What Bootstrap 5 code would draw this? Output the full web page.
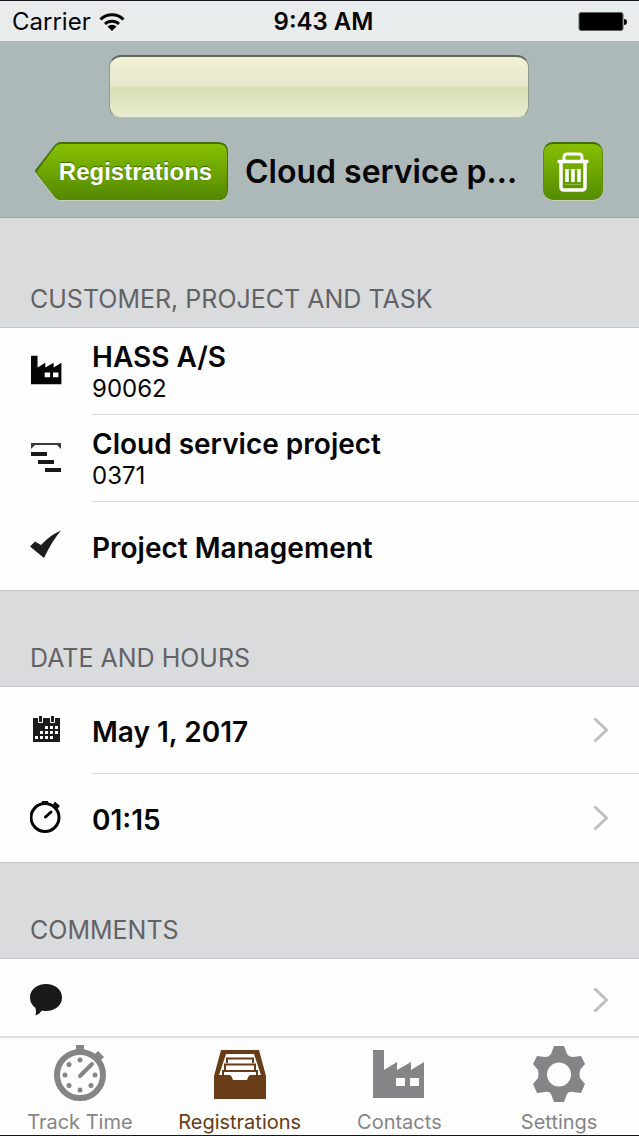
<!DOCTYPE html>
<html lang="en">
<head>
<meta charset="utf-8">
<meta name="viewport" content="width=device-width, initial-scale=1">
<title>Cloud service project</title>
<link href="https://cdn.jsdelivr.net/npm/bootstrap@5.3.0/dist/css/bootstrap.min.css" rel="stylesheet">
<style>
  body { font-family: Inter, "Liberation Sans", sans-serif; background: #dadbdd; color: #050505; }
  .shell { border-top: 1px solid #15161c; border-bottom: 1px solid #15161c; }
  .status-bar { height: 40px; background: #e9eced; font-size: 24px; line-height: 38px; padding: 2px 12px 0; }
  .status-side { flex: 1 1 0; }
  .status-time { padding-left: 8px; }
  .top-area { background: #adb8b8; border-bottom: 1px solid #9da6a6; padding: 14px 36px 15px 34px; }
  .search-field { width: 420px; max-width: 100%; height: 63px; border-radius: 12px; border: 1px solid #929b8b; border-top: 2px solid #62665a; border-bottom-color: #bcc4b4;
    background: linear-gradient(#f1f1d4, #e6e8cb 48%, #d8deb5 52%, #e8edd0); padding: 0 16px; font-size: 24px; }
  .title-row { margin-top: 24px; gap: 16px; }
  .page-title { font-size: 32px; line-height: 60px; font-weight: 600; margin: 0; min-width: 0; }
  .back-btn { position: relative; width: 195px; height: 60px; padding: 0 0 0 8px; border: 0; background: none; color: #fff; font: bold 24px/60px "Liberation Sans", Arial, sans-serif; text-shadow: 0 -1px 1px #3c6a00; }
  .back-btn svg { position: absolute; inset: 0; z-index: 0; }
  .back-btn span { position: relative; z-index: 1; }
  .trash-btn { width: 60px; height: 58px; margin-bottom: 2px; border: 1px solid #5c8f06; border-top: 2px solid #3e6d04; border-radius: 10px; padding: 0; background: linear-gradient(#86bf00, #558c00); box-shadow: 0 1px 0 #c3d1b5; }
  .section-title { font-size: 25px; line-height: 32px; font-weight: 400; color: #636366; margin: 0; padding: 51px 30px 12px; border-bottom: 1px solid #c6c7ca; }
  .section-first { padding-top: 65px; }
  .group-list { background: #fefefe; border-bottom: 1px solid #c6c7ca; }
  .entry { width: 100%; padding: 0 0 0 30px; border: 0; background: none; color: inherit; text-align: left; }
  .entry-icon { width: 32px; height: 36px; flex: none; margin-right: 30px; }
  .entry-body { min-height: 87px; padding-right: 30px; border-bottom: 1px solid #dcdce0; }
  .two-line { padding-top: 4px; }
  .last-entry .entry-body { border-bottom: 0; min-height: 88px; }
  .entry-name { font-size: 28px; line-height: 32px; font-weight: 600; }
  .one-line { padding-top: 3px; }
  .entry-sub { font-size: 24px; line-height: 32px; }
  .note-entry { padding-top: 4px; }
  .note-entry .entry-body { min-height: 73px; }
  .tab-bar { background: #fdfdfd; border-top: 2px solid #dedee1; padding-top: 7px; height: 99px; }
  .tab-link { flex: 1 1 0; color: #858587; text-decoration: none; font-size: 20px; line-height: 24px; }
  .tab-link.current { color: #673c16; }
  .tab-link svg { margin-bottom: 7px; }
</style>
</head>
<body>
<svg width="0" height="0" class="position-absolute" aria-hidden="true">
  <defs>
    <symbol id="factory" viewBox="0 0 52 50"><path fill-rule="evenodd" fill="currentColor" d="M0 1h11v20l13-8v8l14-8v8l13-8v36H0zM23 29v8h9v-8zM37 29v8h9v-8z"/></symbol>
    <symbol id="chevron" viewBox="0 0 16 26"><path d="M1.500 1.500 13.500 13 1.500 24.500" fill="none" stroke="#bfbfc4" stroke-width="3"/></symbol>
  </defs>
</svg>
<div class="shell d-flex flex-column min-vh-100">
  <header>
    <div class="status-bar d-flex align-items-center">
      <div class="status-side d-flex align-items-center gap-2">
        <span>Carrier</span>
        <svg width="26" height="20" viewBox="0 0 26 20" aria-hidden="true"><g fill="none" stroke="#050505" stroke-width="3"><path d="M1.500 7.500a16.500 16.500 0 0 1 23 0M6 12a10 10 0 0 1 14 0"/></g><path d="M8.500 14.500a6.500 6.500 0 0 1 9 0L13 19z"/></svg>
      </div>
      <span class="status-time fw-semibold">9:43 AM</span>
      <div class="status-side d-flex justify-content-end">
        <svg width="50" height="20" viewBox="0 0 50 20" aria-hidden="true"><rect x="2" y="0.500" width="44" height="18" rx="2" stroke="#606264" stroke-width="1"/><path d="M47 7q3 0 3 3t-3 3z"/></svg>
      </div>
    </div>
    <div class="top-area">
      <div class="d-flex justify-content-center">
        <input class="search-field" type="text" aria-label="Active registration">
      </div>
      <div class="title-row d-flex align-items-center">
        <button type="button" class="back-btn flex-shrink-0">
          <svg width="195" height="60" viewBox="0 0 195 60" aria-hidden="true">
            <defs><linearGradient id="leaf" x1="0" y1="0" x2="0" y2="1"><stop offset="0" stop-color="#87c100"/><stop offset="1" stop-color="#528800"/></linearGradient></defs>
            <path d="M27 3.500H184q10 0 10 10V50q0 9-10 9H27q-4 0-7-4L2 33q-2-2 0-4L20 7q3-3.500 7-3.500z" fill="#c3d1b5"/>
            <path d="M27 0H184q10 0 10 10V48q0 10-10 10H27q-4 0-7-4L2 31q-2-2 0-4L20 4q3-4 7-4z" fill="#426f08"/>
            <path d="M27 2H184q9 0 9 9V48q0 10-9 10H27q-4 0-6-3L3 31q-1-1 0-2L21 5q2-3 6-3z" fill="url(#leaf)"/>
          </svg>
          <span>Registrations</span>
        </button>
        <h1 class="page-title text-nowrap flex-grow-1">Cloud service p...</h1>
        <button type="button" class="trash-btn flex-shrink-0 d-flex align-items-center justify-content-center" aria-label="Delete">
          <svg width="32" height="40" viewBox="0 0 32 40" aria-hidden="true"><g fill="none" stroke="#fff" stroke-linecap="round" stroke-linejoin="round"><path stroke-width="3.500" d="M2 9.500H30M4 10V35q0 3 3 3H25q3 0 3-3V10"/><path stroke-width="3" d="M7 8V5q0-3 3-3H22q3 0 3 3V8"/></g><path fill="none" stroke="#fff" stroke-width="3.500" d="M10 17V30M16 17V30M22 17V30"/><path d="M8 17.500H24M8 32.500H24" stroke="#d9ecb8" stroke-opacity=".4" fill="none"/></svg>
        </button>
      </div>
    </div>
  </header>

  <main class="flex-grow-1 d-flex flex-column">
    <h2 class="section-title section-first">CUSTOMER, PROJECT AND TASK</h2>
    <div class="group-list">
      <div class="entry d-flex align-items-center">
        <svg class="entry-icon" viewBox="0 0 32 36" aria-hidden="true"><use href="#factory" x="1" y="1" width="31" height="30"/></svg>
        <div class="entry-body two-line flex-grow-1 d-flex flex-column justify-content-center">
          <div class="entry-name">HASS A/S</div><div class="entry-sub">90062</div>
        </div>
      </div>
      <div class="entry d-flex align-items-center">
        <svg class="entry-icon" viewBox="0 0 32 36" aria-hidden="true"><path fill="#3a3a3c" d="M1 2H31V8L27 4H5L1 8z"/><path fill="#19191b" d="M1 11H17v4H1zM8 19H24v4H8zM15 27H31v4H15z"/></svg>
        <div class="entry-body two-line flex-grow-1 d-flex flex-column justify-content-center">
          <div class="entry-name">Cloud service project</div><div class="entry-sub">0371</div>
        </div>
      </div>
      <div class="entry last-entry d-flex align-items-center">
        <svg class="entry-icon" viewBox="0 0 32 36" aria-hidden="true"><path fill="#1c1c1e" d="M0 18.500 5 13.500 11 17Q20 7 31 2.500 22 13 14 30z"/></svg>
        <div class="entry-body flex-grow-1 d-flex align-items-center"><div class="entry-name one-line">Project Management</div></div>
      </div>
    </div>

    <h2 class="section-title">DATE AND HOURS</h2>
    <div class="group-list">
      <button type="button" class="entry d-flex align-items-center">
        <svg class="entry-icon" viewBox="0 0 32 36" aria-hidden="true"><path fill="#1c1c1e" d="M3 5H30V29H3z"/><path fill="#1c1c1e" stroke="#fff" d="M8.500 2.500h4v7h-4zM20.500 2.500h4v7h-4z"/><path fill="none" stroke="#fff" stroke-width="3" stroke-dasharray="3 2" d="M15 14.500H28M10 19.500H28M5 24.500H23"/></svg>
        <span class="entry-body flex-grow-1 d-flex align-items-center justify-content-between"><span class="entry-name one-line">May 1, 2017</span><svg width="16" height="26" aria-hidden="true"><use href="#chevron"/></svg></span>
      </button>
      <button type="button" class="entry last-entry d-flex align-items-center">
        <svg class="entry-icon" viewBox="0 0 32 36" aria-hidden="true"><circle cx="15" cy="17.500" r="14" fill="none" stroke="#050505" stroke-width="3"/><path fill="none" stroke="#050505" stroke-width="3" d="M12 2.500h6M24 3l5 4M26 8l2-3"/><path stroke="#050505" stroke-width="3" stroke-linecap="round" d="M15.500 17 21 12"/></svg>
        <span class="entry-body flex-grow-1 d-flex align-items-center justify-content-between"><span class="entry-name one-line">01:15</span><svg width="16" height="26" aria-hidden="true"><use href="#chevron"/></svg></span>
      </button>
    </div>

    <h2 class="section-title">COMMENTS</h2>
    <div class="group-list flex-grow-1 border-0">
      <button type="button" class="entry last-entry note-entry d-flex align-items-center" aria-label="Add a comment">
        <svg class="entry-icon" viewBox="0 0 32 36" aria-hidden="true"><path fill="#19191b" d="M16 2C25 2 32 7.500 32 15.500S25 29 16 29q-2 0-4-.5-3 4-6.500 5 1-4 0-7.500Q0 22 0 15.500C0 7.500 7 2 16 2z"/></svg>
        <span class="entry-body flex-grow-1 d-flex align-items-center justify-content-end"><svg width="16" height="26" aria-hidden="true"><use href="#chevron"/></svg></span>
      </button>
    </div>
  </main>

  <nav class="tab-bar d-flex" aria-label="Main">
    <a href="#" class="tab-link d-flex flex-column align-items-center">
      <svg width="54" height="58" viewBox="0 0 54 58" aria-hidden="true"><circle cx="27" cy="30" r="23" fill="none" stroke="currentColor" stroke-width="6"/><path fill="currentColor" d="M23 0h8v6h-8zM43 12l-2-2 4-4 6 6-4 4-2-2-2 2-3-3z"/><path stroke="currentColor" stroke-width="4" stroke-linecap="round" d="M27 31 39 19"/><g fill="currentColor"><circle cx="27" cy="15" r="2.500"/><circle cx="27" cy="45" r="2.500"/><circle cx="12" cy="30" r="2.500"/><circle cx="42" cy="30" r="2.500"/><circle cx="16" cy="19.500" r="2.500"/><circle cx="16" cy="40.500" r="2.500"/><circle cx="38" cy="40.500" r="2.500"/></g></svg>
      <span>Track Time</span>
    </a>
    <a href="#" class="tab-link current d-flex flex-column align-items-center" aria-current="page">
      <svg width="52" height="58" viewBox="0 0 52 58" aria-hidden="true"><path fill="currentColor" d="M7 5H45L52 31V54H0V31z"/><path fill="#fdfdfd" d="M12 9H40L47 30H36q-2 1-3 5H19q-1-4-3-5H5z"/><path fill="none" stroke="currentColor" stroke-width="2" d="M13 18V13.500H39V18M11 25V19.500H41V25M9 31V26H43V31"/></svg>
      <span>Registrations</span>
    </a>
    <a href="#" class="tab-link d-flex flex-column align-items-center">
      <svg width="52" height="58" viewBox="0 0 52 58" aria-hidden="true"><use href="#factory" x="0" y="4" width="52" height="50"/></svg>
      <span>Contacts</span>
    </a>
    <a href="#" class="tab-link d-flex flex-column align-items-center">
      <svg width="54" height="58" viewBox="0 0 54 58" aria-hidden="true"><path fill="currentColor" fill-rule="evenodd" d="M22 1H32L35 9Q37 12 41 12L49 11 53 19 48 25Q47 29 48 33L53 39 49 48 41 47Q37 46 35 49L32 57H22L19 49Q17 46 13 47L5 48 1 39 6 33Q7 29 6 25L1 19 5 11 13 12Q17 12 19 9zM27 17.500a12 12 0 1 0 0 24 12 12 0 0 0 0-24z"/></svg>
      <span>Settings</span>
    </a>
  </nav>
</div>
<script src="https://cdn.jsdelivr.net/npm/bootstrap@5.3.0/dist/js/bootstrap.bundle.min.js"></script>
</body>
</html>
